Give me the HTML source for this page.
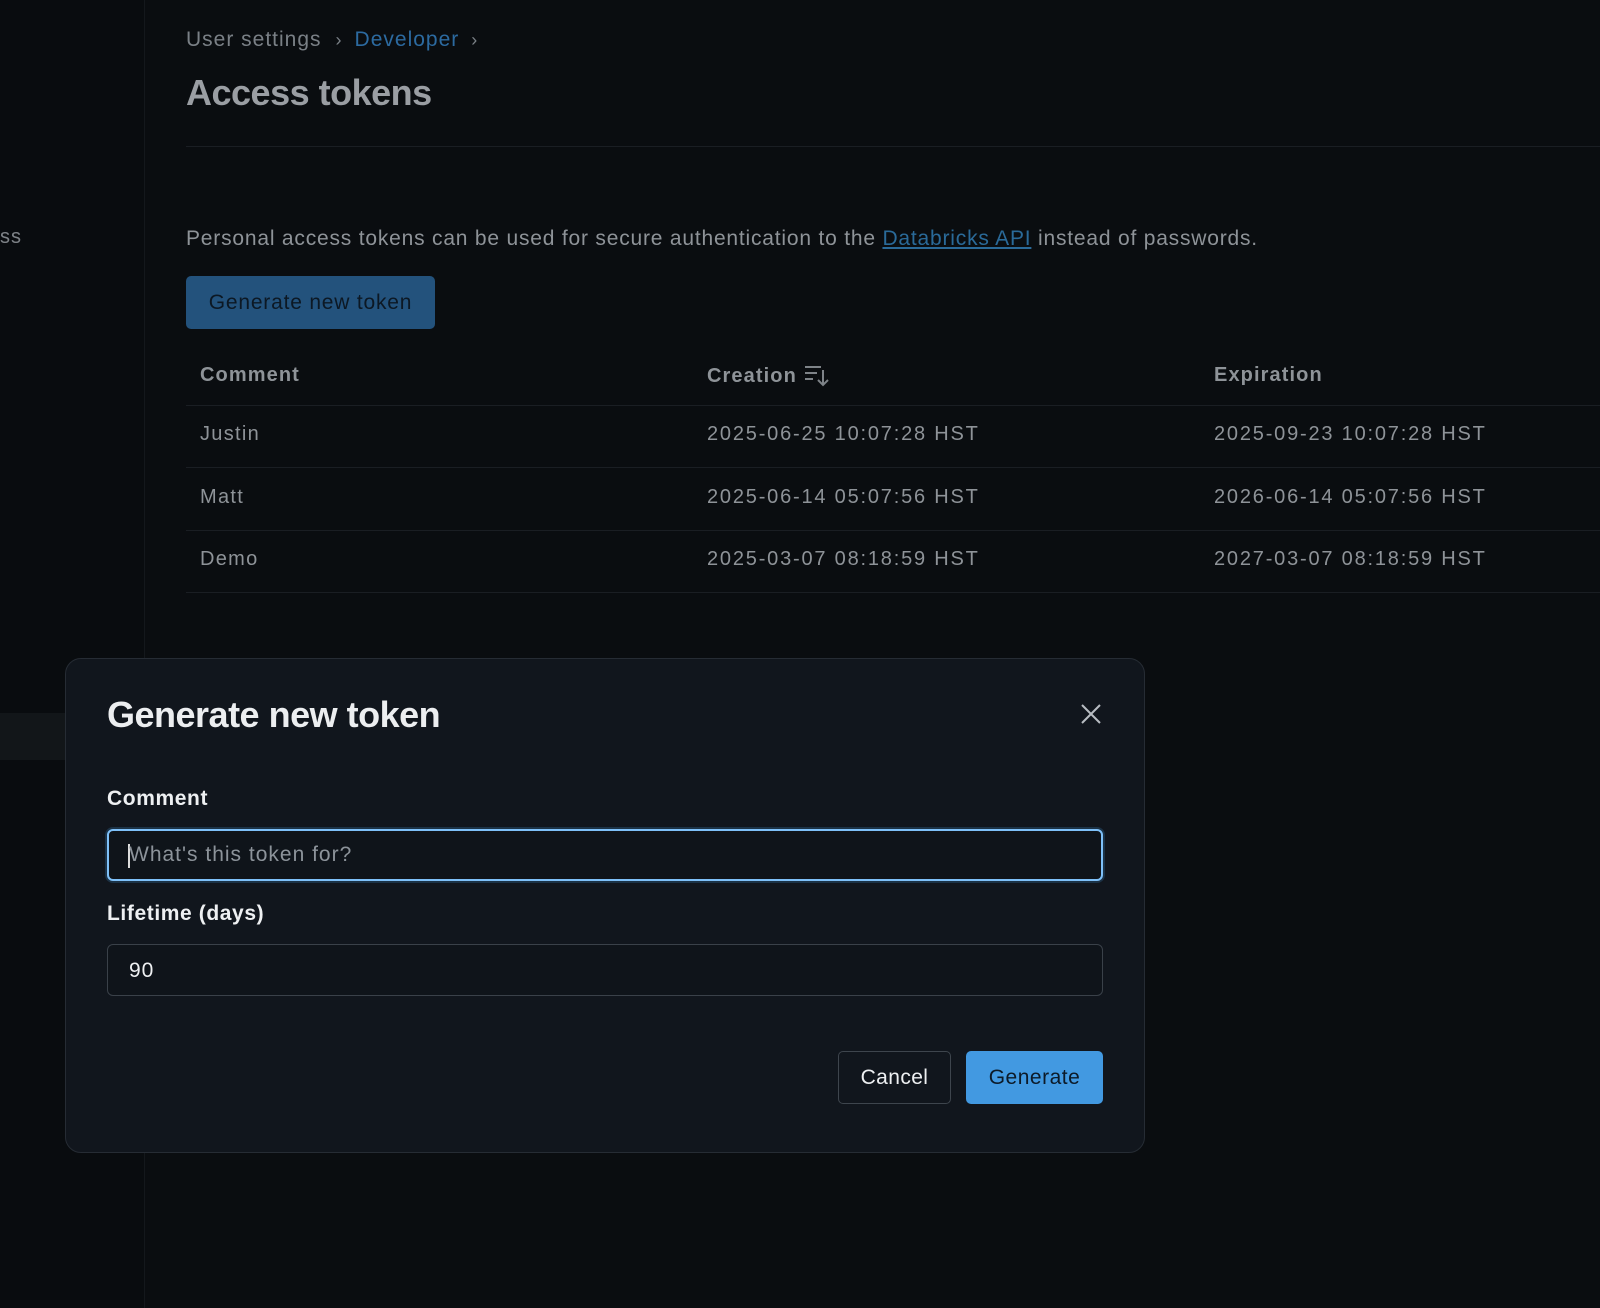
<!DOCTYPE html>
<html><head><meta charset="utf-8"><style>
*{box-sizing:border-box;margin:0;padding:0}
body{width:1600px;height:1308px;background:#0a0d10;font-family:"Liberation Sans",sans-serif;position:relative;overflow:hidden;color:#8e9398}
.a{position:absolute;white-space:nowrap}
.side{position:absolute;left:0;top:0;width:145px;height:1308px;border-right:1px solid #14181c;background:#090c0f}
.hr{position:absolute;left:186px;right:0;height:1px;background:#1a1e23}
.t{font-size:20px;color:#8e9398;letter-spacing:1.3px}
.d{letter-spacing:1.8px}
.th{font-size:20px;font-weight:bold;color:#8e9398;letter-spacing:1.1px}
.modal{position:absolute;left:65px;top:658px;width:1080px;height:495px;background:#11161d;border:1px solid #262c34;border-radius:16px}
.inp{position:absolute;left:41px;width:996px;height:52px;border-radius:6px;background:#0f141a}
.lbl{position:absolute;left:41px;font-size:21px;font-weight:bold;color:#eef0f2;letter-spacing:0.6px}
</style></head><body>
<div class="side"></div>
<div class="a" style="left:0;top:226px;font-size:20px;color:#7e8388;letter-spacing:1px">ss</div>
<div class="a" style="left:0;top:713px;width:66px;height:47px;background:#121619"></div>

<div class="a" style="left:186px;top:28px;font-size:21px;color:#7a8086;letter-spacing:1px">User settings<span style="margin:0 12px 0 14px;font-size:18px">›</span><span style="color:#2c6aa0">Developer</span><span style="margin:0 12px;font-size:18px">›</span></div>
<div class="a" style="left:186px;top:72px;font-size:36px;font-weight:bold;color:#9a9ea3;letter-spacing:-0.5px">Access tokens</div>
<div class="hr" style="top:146px"></div>
<div class="a t" style="left:186px;top:227px;font-size:21px;letter-spacing:0.8px">Personal access tokens can be used for secure authentication to the <span style="color:#2a6a99;text-decoration:underline">Databricks API</span> instead of passwords.</div>
<div class="a" style="left:186px;top:276px;width:249px;height:53px;background:#23527c;border-radius:5px;color:#0c1824;font-size:21px;text-align:center;line-height:53px;letter-spacing:0.8px">Generate new token</div>

<div class="a th" style="left:200px;top:364px">Comment</div>
<div class="a th" style="left:707px;top:364px;line-height:24px">Creation<svg width="26" height="26" viewBox="0 0 26 26" style="position:absolute;top:-2px;margin-left:6px"><g stroke="#7e8388" stroke-width="2" fill="none"><path d="M2 5h16M2 11h12M2 17h8"/><path d="M20 8v15M15 18l5 5 5-5"/></g></svg></div>
<div class="a th" style="left:1214px;top:364px">Expiration</div>
<div class="hr" style="top:405px"></div>
<div class="a t" style="left:200px;top:423px">Justin</div><div class="a t d" style="left:707px;top:423px">2025-06-25 10:07:28 HST</div><div class="a t d" style="left:1214px;top:423px">2025-09-23 10:07:28 HST</div>
<div class="hr" style="top:467px"></div>
<div class="a t" style="left:200px;top:486px">Matt</div><div class="a t d" style="left:707px;top:486px">2025-06-14 05:07:56 HST</div><div class="a t d" style="left:1214px;top:486px">2026-06-14 05:07:56 HST</div>
<div class="hr" style="top:530px"></div>
<div class="a t" style="left:200px;top:548px">Demo</div><div class="a t d" style="left:707px;top:548px">2025-03-07 08:18:59 HST</div><div class="a t d" style="left:1214px;top:548px">2027-03-07 08:18:59 HST</div>
<div class="hr" style="top:592px"></div>

<div class="modal">
 <div class="a" style="left:41px;top:35px;font-size:36px;font-weight:bold;color:#eceef0;letter-spacing:-0.5px">Generate new token</div>
 <svg class="a" style="left:1013px;top:43px" width="24" height="24" viewBox="0 0 24 24"><path d="M3 3l18 18M21 3L3 21" stroke="#b8bdc2" stroke-width="2"/></svg>
 <div class="lbl" style="top:128px">Comment</div>
 <div class="inp" style="top:170px;border:2px solid #7ec0f8;box-shadow:0 0 0 2px #1b3246"><div class="a" style="left:19px;top:13px;width:1.5px;height:24px;background:#ddd"></div><div class="a" style="left:20px;top:12px;font-size:21px;color:#8c939a;letter-spacing:1px">What's this token for?</div></div>
 <div class="lbl" style="top:243px">Lifetime (days)</div>
 <div class="inp" style="top:285px;border:1px solid #3a4149"><div class="a" style="left:21px;top:14px;font-size:21px;color:#eef0f2;letter-spacing:1px">90</div></div>
 <div class="a" style="left:772px;top:392px;width:113px;height:53px;border:1px solid #3e454d;border-radius:5px;color:#eef0f2;font-size:21px;text-align:center;line-height:51px;letter-spacing:0.4px">Cancel</div>
 <div class="a" style="left:900px;top:392px;width:137px;height:53px;background:#4299e1;border-radius:5px;color:#0c1a28;font-size:21px;text-align:center;line-height:53px;letter-spacing:0.5px">Generate</div>
</div>
</body></html>
